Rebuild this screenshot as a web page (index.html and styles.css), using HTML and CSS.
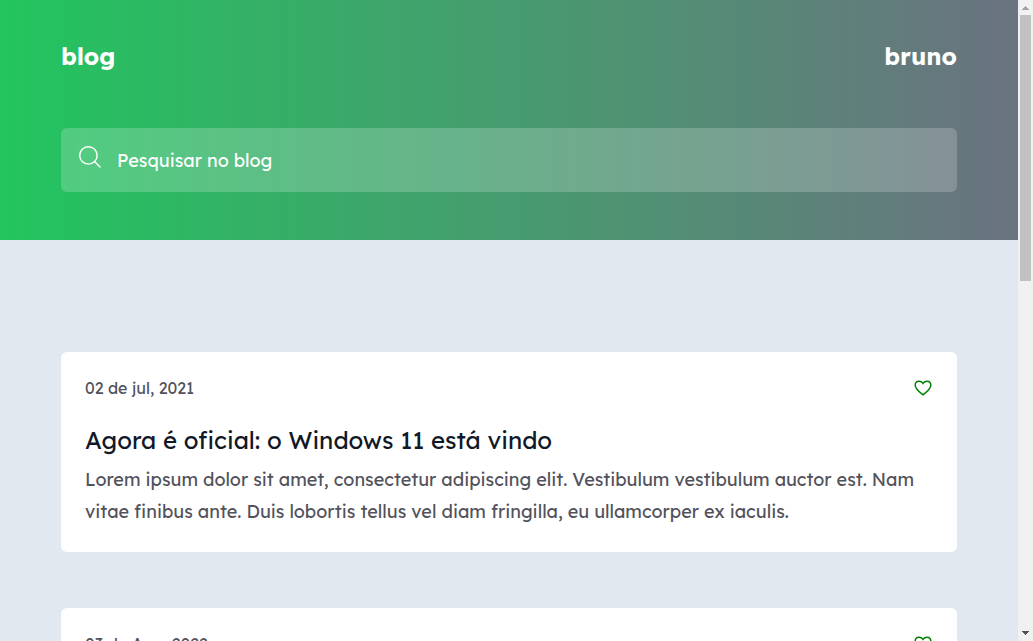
FILE: index.html
```html
<!DOCTYPE html>
<html lang="pt-BR">
<head>
<meta charset="utf-8">
<title>blog</title>
<link rel="stylesheet" href="styles.css">
</head>
<body>
<div class="window">
  <div class="page">
    <header class="header">
      <nav class="nav">
        <strong class="brand">blog</strong>
        <strong class="author">bruno</strong>
      </nav>
      <div class="search">
        <svg class="search-icon" viewBox="0 0 24 24"><circle cx="10.400" cy="10.400" r="8.700"/><path d="M16.600 16.600 22 22"/></svg>
        <span class="search-text">Pesquisar no blog</span>
      </div>
    </header>
    <main class="posts">
      <article class="card">
        <div class="meta">
          <time class="date">02 de jul, 2021</time>
          <svg class="heart" viewBox="0 0 20 20"><path d="M10 16.900C7.500 14.900 2.200 11 2.200 7.200 2.200 4.800 3.900 3.200 6 3.200c1.800 0 3.200.9 4 2.100.8-1.200 2.200-2.100 4-2.100 2.100 0 3.800 1.600 3.800 4C17.800 11 12.500 14.900 10 16.900z"/></svg>
        </div>
        <h2 class="title">Agora é oficial: o Windows 11 está vindo</h2>
        <p class="text">Lorem ipsum dolor sit amet, consectetur adipiscing elit. Vestibulum vestibulum auctor est. Nam vitae finibus ante. Duis lobortis tellus vel diam fringilla, eu ullamcorper ex iaculis.</p>
      </article>
      <article class="card">
        <div class="meta">
          <time class="date">03 de Ago, 2022</time>
          <svg class="heart" viewBox="0 0 20 20"><path d="M10 16.900C7.500 14.900 2.200 11 2.200 7.200 2.200 4.800 3.900 3.200 6 3.200c1.800 0 3.200.9 4 2.100.8-1.200 2.200-2.100 4-2.100 2.100 0 3.800 1.600 3.800 4C17.800 11 12.500 14.900 10 16.900z"/></svg>
        </div>
      </article>
    </main>
  </div>
  <div class="scrollbar">
    <svg class="arrow arrow-up" viewBox="0 0 15 15"><path d="M4 10V9h1V8h1V7h1V6h1v1h1v1h1v1h1v1z"/></svg>
    <div class="thumb"></div>
    <svg class="arrow arrow-down" viewBox="0 0 15 15"><path d="M4 5v1h1v1h1v1h1v1h1V8h1V7h1V6h1V5z"/></svg>
  </div>
</div>
</body>
</html>
```

FILE: styles.css
```css
* { box-sizing: border-box; }
body { margin: 0; font-family: Lexend, Lato, sans-serif; overflow: hidden; }
.window { display: flex; height: 641px; overflow: hidden; }
.page { width: 1018px; height: 641px; overflow: hidden; background: #e2e8f0; }
.header { height: 240px; padding: 40px 61px 48px; background: linear-gradient(to right, #22c55e, #6b7280); color: #fff; }
.nav { display: flex; justify-content: space-between; height: 88px; font-size: 24px; line-height: 32px; }
.brand, .author { font-weight: 700; }
.search { display: flex; height: 64px; padding-left: 17px; border-radius: 6px; background: rgba(255, 255, 255, .2); }
.search-icon { width: 24px; height: 24px; margin: 17px 15px 0 0; fill: none; stroke: #fff; stroke-width: 1.4; stroke-linecap: round; }
.search-text { font-size: 18px; line-height: 66px; white-space: nowrap; }
.posts { display: flex; flex-direction: column; gap: 56px; padding: 112px 61px 0; }
.card { flex: none; height: 200px; padding: 24px; border-radius: 6px; background: #fff; }
.meta { display: flex; justify-content: space-between; align-items: center; height: 24px; }
.date { font-size: 16px; line-height: 24px; color: #52525b; white-space: nowrap; }
.heart { width: 20px; height: 20px; fill: none; stroke: #008000; stroke-width: 1.5; }
.title { margin: 24px 0 8px; font-size: 24px; line-height: 32px; font-weight: 400; color: #111827; white-space: nowrap; }
.text { margin: 0; font-size: 18px; line-height: 32px; color: #52525b; }
.scrollbar { display: flex; flex-direction: column; width: 15px; height: 641px; background: #f1f1f1; }
.arrow { flex: none; width: 15px; height: 15px; }
.arrow-up { fill: #a3a3a3; }
.arrow-down { margin-top: auto; fill: #505050; }
.thumb { width: 11px; height: 266px; margin-left: 2px; background: #c1c1c1; }
```
